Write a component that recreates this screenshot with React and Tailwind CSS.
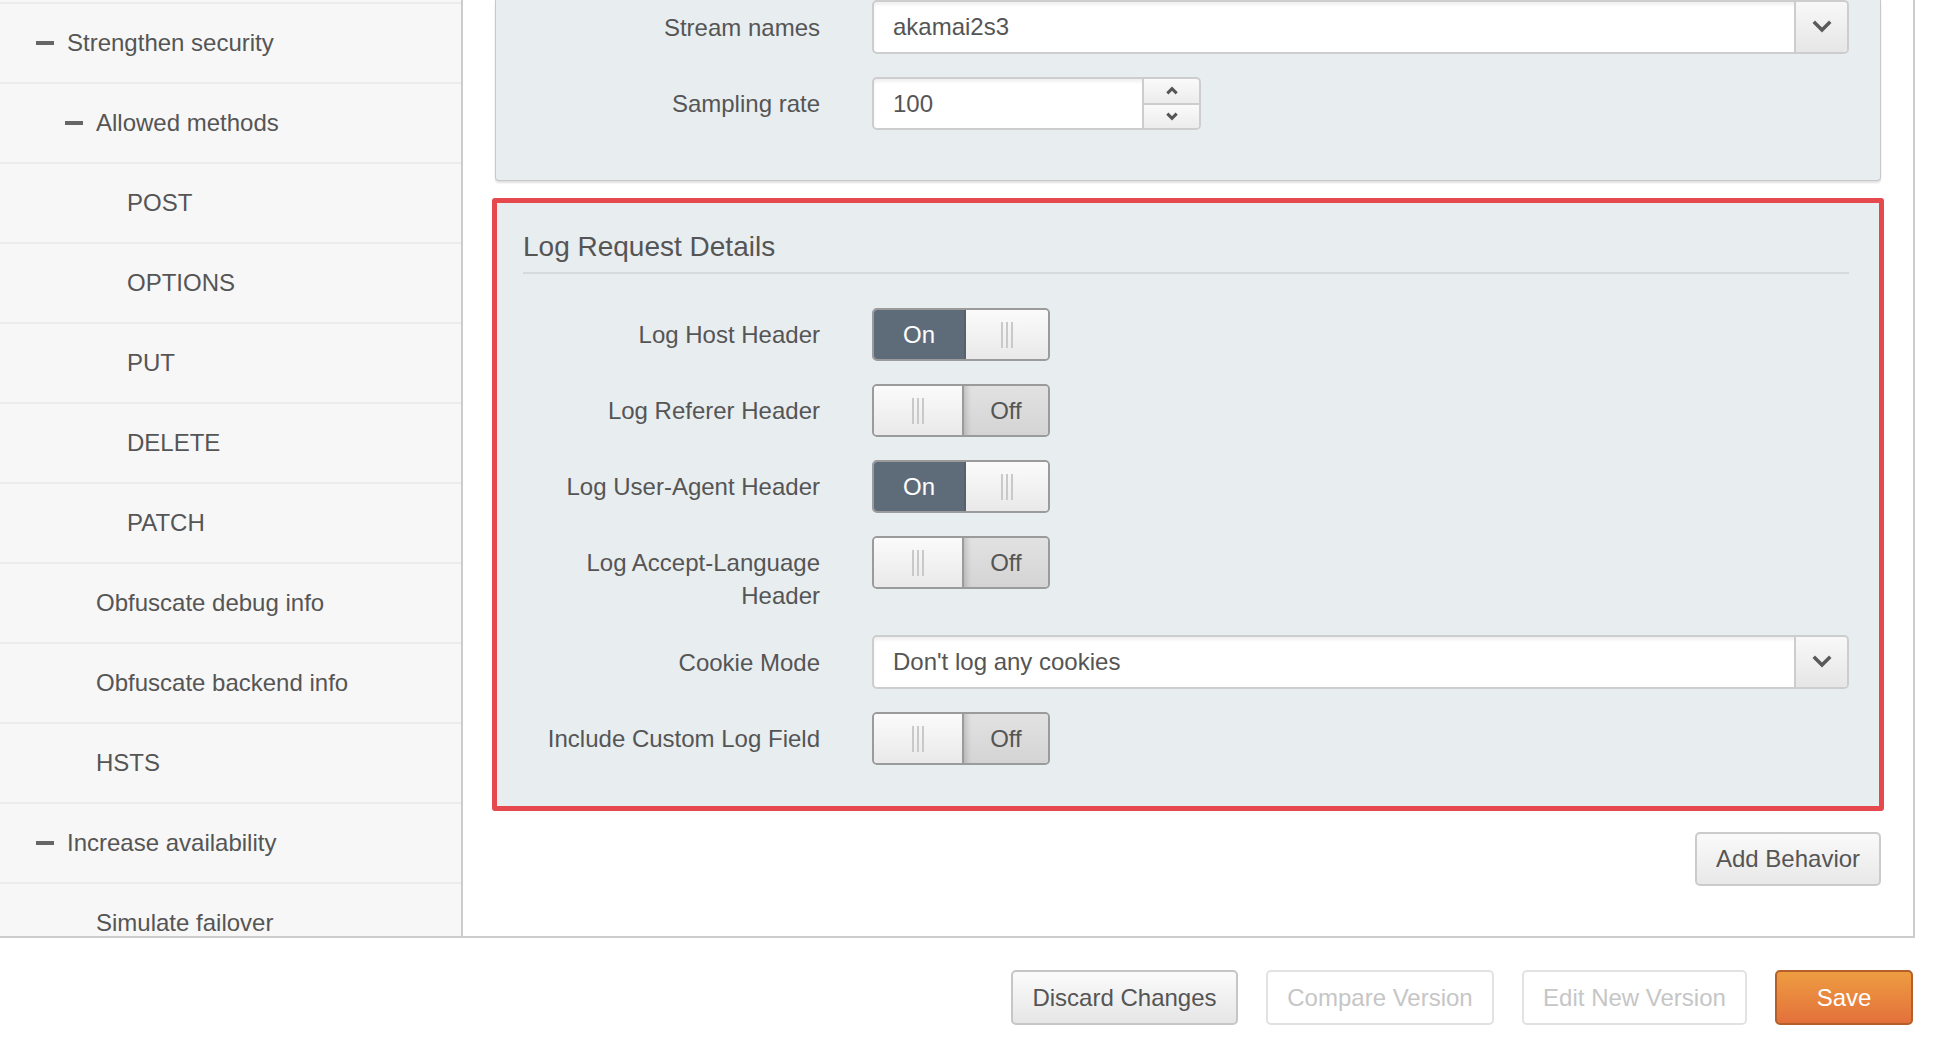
import React from "react";

const sideItems = [
  { label: "Strengthen security", level: 0, dash: true },
  { label: "Allowed methods", level: 1, dash: true },
  { label: "POST", level: 2 },
  { label: "OPTIONS", level: 2 },
  { label: "PUT", level: 2 },
  { label: "DELETE", level: 2 },
  { label: "PATCH", level: 2 },
  { label: "Obfuscate debug info", level: 1 },
  { label: "Obfuscate backend info", level: 1 },
  { label: "HSTS", level: 1 },
  { label: "Increase availability", level: 0, dash: true },
  { label: "Simulate failover", level: 1 },
];

const indent = ["pl-[67px]", "pl-[96px]", "pl-[127px]"];

const ChevronDown = ({ size = 20, stroke = 3.5 }) => (
  <svg width={size} height={size} viewBox="0 0 20 20" fill="none">
    <polyline points="3,6 10,13 17,6" stroke="#5a5a5a" strokeWidth={stroke} strokeLinecap="square" />
  </svg>
);

const ChevronUp = ({ size = 14, stroke = 2.6 }) => (
  <svg width={size} height={size} viewBox="0 0 12 12" fill="none">
    <polyline points="2,8 6,4 10,8" stroke="#555" strokeWidth={stroke} />
  </svg>
);

const ChevronSmallDown = ({ size = 14, stroke = 2.6 }) => (
  <svg width={size} height={size} viewBox="0 0 12 12" fill="none">
    <polyline points="2,4 6,8 10,4" stroke="#555" strokeWidth={stroke} />
  </svg>
);

const Grip = () => (
  <div className="flex gap-[3px] h-[26px]">
    <span className="w-[2px] bg-[#c9c9c9]" />
    <span className="w-[2px] bg-[#c9c9c9]" />
    <span className="w-[2px] bg-[#c9c9c9]" />
  </div>
);

const Toggle = ({ on }) => (
  <div className="flex w-[178px] h-[53px] rounded-[5px] border-2 border-[#9b9b9b] overflow-hidden text-[24px]">
    {on ? (
      <>
        <div className="w-[90px] bg-[#5e6c7a] text-white flex items-center justify-center">On</div>
        <div className="flex-1 border-l-2 border-[#55626e] bg-linear-to-b from-[#fbfbfb] to-[#e9e9e9] flex items-center justify-center">
          <Grip />
        </div>
      </>
    ) : (
      <>
        <div className="w-[88px] bg-linear-to-b from-[#fbfbfb] to-[#e9e9e9] flex items-center justify-center">
          <Grip />
        </div>
        <div className="flex-1 border-l-2 border-[#9b9b9b] bg-linear-to-b from-[#e2e2e2] to-[#d4d4d4] shadow-[inset_8px_0_6px_-6px_rgba(0,0,0,0.18)] text-[#555] flex items-center justify-center">
          Off
        </div>
      </>
    )}
  </div>
);

const Select = ({ value }) => (
  <div className="flex flex-1 h-[54px] bg-white border-2 border-[#cdcdcd] rounded-[5px] shadow-[inset_0_3px_3px_rgba(0,0,0,0.06)]">
    <div className="flex-1 flex items-center pl-[19px] text-[24px] text-[#555]">{value}</div>
    <div className="w-[53px] border-l-2 border-[#cdcdcd] rounded-r-[4px] bg-linear-to-b from-[#f8f8f8] to-[#e6e6e6] flex items-center justify-center">
      <ChevronDown />
    </div>
  </div>
);

const NumberInput = ({ value }) => (
  <div className="flex w-[329px] h-[53px] bg-white border-2 border-[#cdcdcd] rounded-[5px] shadow-[inset_0_3px_3px_rgba(0,0,0,0.06)]">
    <div className="flex-1 flex items-center pl-[19px] text-[24px] text-[#555]">{value}</div>
    <div className="w-[57px] border-l-2 border-[#cdcdcd] flex flex-col">
      <div className="flex-1 bg-linear-to-b from-[#fafafa] to-[#ececec] border-b-2 border-[#cdcdcd] rounded-tr-[4px] flex items-center justify-center">
        <ChevronUp />
      </div>
      <div className="flex-1 bg-linear-to-b from-[#fafafa] to-[#ececec] rounded-br-[4px] flex items-center justify-center">
        <ChevronSmallDown />
      </div>
    </div>
  </div>
);

const Row = ({ label, children, center = true }) => (
  <div className={center ? "flex items-center" : "flex items-start"}>
    <div className={`w-[297px] shrink-0 text-right text-[24px] leading-[33px] text-[#555] ${center ? "" : "pt-[10px]"}`}>
      {label}
    </div>
    <div className="ml-[52px] flex flex-1">{children}</div>
  </div>
);

export default function App() {
  return (
    <div className="w-[1946px] h-[1056px] bg-white overflow-hidden font-['Liberation_Sans',Arial,sans-serif]">
      <div className="flex h-[938px] w-[1915px] border-b-2 border-r-2 border-[#cccccc]">
        {/* Sidebar */}
        <aside className="w-[463px] shrink-0 bg-[#f7f7f7] border-r-2 border-[#cccccc] overflow-hidden">
          <div className="h-[2px]" />
          {sideItems.map((item) => (
            <div
              key={item.label}
              className={`h-[80px] border-t-2 border-[#ececec] flex items-center text-[24px] text-[#555] ${indent[item.level]}`}
            >
              {item.dash && <span className="w-[18px] h-[4px] bg-[#666] -ml-[31px] mr-[13px]" />}
              {item.label}
            </div>
          ))}
        </aside>

        {/* Main */}
        <main className="flex-1 overflow-hidden">
          <div className="mx-[32px] bg-[#e8edf0] border border-t-0 border-[#c8c8c8] rounded-b-[4px] shadow-[0_2px_2px_rgba(0,0,0,0.12)] pl-[27px] pr-[31px] pb-[50px]">
            <Row label="Stream names">
              <Select value="akamai2s3" />
            </Row>
            <div className="mt-[23px]">
              <Row label="Sampling rate">
                <NumberInput value="100" />
              </Row>
            </div>
          </div>

          <div className="mt-[17px] mx-[29px] border-[5px] border-[#e5484d] rounded-[3px] bg-[#e8edf0] pl-[26px] pr-[30px] pt-[27px] pb-[41px]">
            <div className="text-[28px] leading-[33px] text-[#555] pb-[9px] border-b-2 border-[#d5dadd]">
              Log Request Details
            </div>
            <div className="mt-[34px] flex flex-col gap-[23px]">
              <Row label="Log Host Header">
                <Toggle on />
              </Row>
              <Row label="Log Referer Header">
                <Toggle on={false} />
              </Row>
              <Row label="Log User-Agent Header">
                <Toggle on />
              </Row>
              <Row label={<>Log Accept-Language<br />Header</>} center={false}>
                <Toggle on={false} />
              </Row>
              <Row label="Cookie Mode">
                <Select value="Don't log any cookies" />
              </Row>
              <Row label="Include Custom Log Field">
                <Toggle on={false} />
              </Row>
            </div>
          </div>

          <div className="flex justify-end mr-[32px] mt-[21px]">
            <button className="w-[186px] h-[54px] rounded-[5px] border-2 border-[#cbcbcb] bg-linear-to-b from-[#fafafa] to-[#e8e8e8] text-[24px] text-[#555]">
              Add Behavior
            </button>
          </div>
        </main>
      </div>

      {/* Footer actions */}
      <div className="flex justify-end gap-[28px] pt-[32px] w-[1913px]">
        <button className="w-[227px] h-[55px] rounded-[5px] border-2 border-[#c6c6c6] bg-linear-to-b from-[#fbfbfb] to-[#e6e6e6] text-[24px] text-[#555]">
          Discard Changes
        </button>
        <button className="w-[228px] h-[55px] rounded-[5px] border-2 border-[#e2e2e2] bg-white text-[24px] text-[#c6c6c6]">
          Compare Version
        </button>
        <button className="w-[225px] h-[55px] rounded-[5px] border-2 border-[#e2e2e2] bg-white text-[24px] text-[#c6c6c6]">
          Edit New Version
        </button>
        <button className="w-[138px] h-[55px] rounded-[5px] border-2 border-[#b5602a] bg-linear-to-b from-[#ed9c41] to-[#e3703b] text-[24px] text-white">
          Save
        </button>
      </div>
    </div>
  );
}
